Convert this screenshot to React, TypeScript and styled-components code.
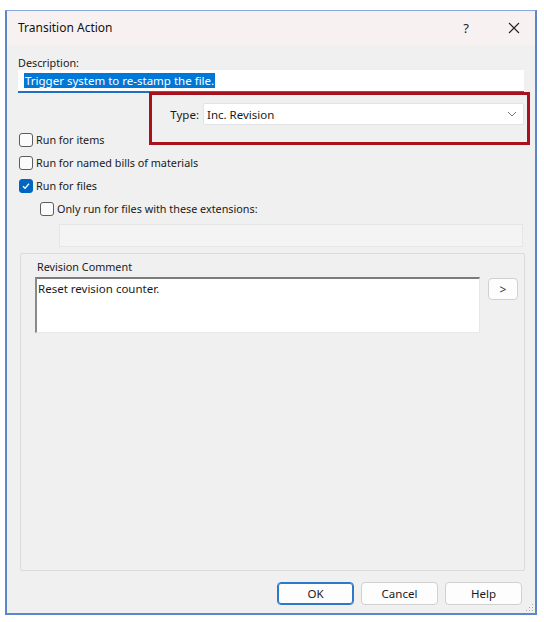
import React from "react";
import styled, { createGlobalStyle } from "styled-components";

const Global = createGlobalStyle`
  html, body { margin: 0; padding: 0; background: #ffffff; }
  body { font-family: "Noto Sans", "Open Sans", sans-serif; font-size: 10.8px; color: #1a1a1a; }
  * { box-sizing: border-box; }
`;

const Window = styled.div`
  margin: 10px 0 0 5px;
  width: 532px;
  height: 605px;
  border: 2px solid #5b86c9;
  border-top: 1px solid #8aa9da;
  background: #f0f0f0;
  display: flex;
  flex-direction: column;
  position: relative;
`;

const TitleBar = styled.div`
  height: 34px;
  background: #f8f1f1;
  display: flex;
  align-items: center;
  padding: 0 0 1px 11px;
`;

const Title = styled.div`
  flex: 1;
  font-size: 12px;
  color: #111;
`;

const TitleButton = styled.div<{ $w: number }>`
  width: ${(p) => p.$w}px;
  height: 33px;
  display: flex;
  align-items: center;
  justify-content: center;
  font-size: 13px;
  color: #222;
`;

const Body = styled.div`
  flex: 1;
  display: flex;
  flex-direction: column;
  padding: 10px 11px 0 11px;
  position: relative;
`;

const Label = styled.div`
  height: 15px;
  line-height: 15px;
`;

const DescField = styled.div`
  height: 23px;
  background: #fff;
  border-bottom: 2px solid #1f6fc2;
  display: flex;
  align-items: center;
  padding-left: 6px;
  font-size: 11.5px;
`;

const Selected = styled.span`
  background: #0078d7;
  color: #fff;
  line-height: 15px;
  padding: 0 1px;
`;

const TypeRow = styled.div`
  margin-top: 10px;
  display: flex;
  align-items: center;
  justify-content: flex-end;
  gap: 4px;
  font-size: 11.5px;
`;

const Select = styled.div`
  width: 321px;
  height: 22px;
  background: #fff;
  border: 1px solid #e3e3e3;
  border-radius: 2px;
  display: flex;
  align-items: center;
  justify-content: space-between;
  padding: 0 6px 0 3px;
`;

const Annotation = styled.div`
  position: absolute;
  left: 142px;
  top: 47px;
  width: 381px;
  height: 53px;
  border: 3px solid #a8121f;
  pointer-events: none;
`;

const CheckList = styled.div`
  margin-top: 3px;
`;

const CheckRow = styled.div<{ $indent?: number }>`
  height: 23px;
  display: flex;
  align-items: center;
  gap: 3px;
  padding-left: ${(p) => 1 + (p.$indent ?? 0)}px;
`;

const Box = styled.div<{ $checked?: boolean }>`
  width: 14px;
  height: 14px;
  border-radius: 3px;
  border: 1px solid ${(p) => (p.$checked ? "#0067c0" : "#5d5d5d")};
  background: ${(p) => (p.$checked ? "#0067c0" : "#fbfbfb")};
  display: flex;
  align-items: center;
  justify-content: center;
`;

const ExtField = styled.div`
  margin: 4px 1px 0 41px;
  height: 23px;
  background: #f4f4f4;
  border: 1px solid #e6e6e6;
`;

const Group = styled.fieldset`
  margin: 6px 0 0 2px;
  height: 318px;
  border: 1px solid #dadada;
  border-radius: 2px;
  padding: 5px 6px 0 14px;
  display: flex;
  flex-direction: column;
`;

const GroupLabel = styled.div`
  height: 15px;
  line-height: 15px;
  padding-left: 2px;
`;

const CommentRow = styled.div`
  margin-top: 3px;
  display: flex;
  gap: 8px;
  align-items: flex-start;
  font-size: 11.5px;
`;

const TextArea = styled.div`
  width: 445px;
  height: 56px;
  background: #fff;
  border-top: 2px solid #7c7c7c;
  border-left: 2px solid #8a8a8a;
  border-right: 1px solid #e8e8e8;
  border-bottom: 1px solid #e8e8e8;
  padding: 2px 1px;
  line-height: 15px;
`;

const SmallButton = styled.div`
  width: 30px;
  height: 22px;
  margin-top: 1px;
  background: #fdfdfd;
  border: 1px solid #d0d0d0;
  border-radius: 4px;
  display: flex;
  align-items: center;
  justify-content: center;
  font-size: 12px;
  color: #333;
`;

const Footer = styled.div`
  display: flex;
  justify-content: flex-end;
  gap: 7px;
  padding: 11px 2px 0 0;
`;

const Button = styled.div<{ $default?: boolean }>`
  width: 77px;
  height: 23px;
  background: #fdfdfd;
  border: 1px solid ${(p) => (p.$default ? "#2f78c8" : "#d0d0d0")};
  box-shadow: ${(p) => (p.$default ? "inset 0 0 0 1px #2f78c8" : "none")};
  border-radius: 4px;
  display: flex;
  align-items: center;
  justify-content: center;
  font-size: 11.5px;
`;

const Grip = styled.svg`
  position: absolute;
  right: 1px;
  bottom: 1px;
`;

const Check = ({ checked, label, indent }: { checked?: boolean; label: string; indent?: number }) => (
  <CheckRow $indent={indent}>
    <Box $checked={checked}>
      {checked && (
        <svg width="10" height="10" viewBox="0 0 10 10">
          <path d="M2 5.2 L4.1 7.2 L8 2.8" fill="none" stroke="#fff" strokeWidth="1.3" />
        </svg>
      )}
    </Box>
    <span>{label}</span>
  </CheckRow>
);

export default function App() {
  return (
    <>
      <Global />
      <Window>
        <TitleBar>
          <Title>Transition Action</Title>
          <TitleButton $w={54}>?</TitleButton>
          <TitleButton $w={42}>
            <svg width="12" height="12" viewBox="0 0 12 12">
              <path d="M1 1 L11 11 M11 1 L1 11" stroke="#222" strokeWidth="1.1" />
            </svg>
          </TitleButton>
        </TitleBar>
        <Body>
          <Label>Description:</Label>
          <DescField>
            <Selected>Trigger system to re-stamp the file.</Selected>
          </DescField>
          <TypeRow>
            <span>Type:</span>
            <Select>
              <span>Inc. Revision</span>
              <svg width="10" height="6" viewBox="0 0 10 6">
                <path d="M1 1 L5 5 L9 1" fill="none" stroke="#777" strokeWidth="1" />
              </svg>
            </Select>
          </TypeRow>
          <Annotation />
          <CheckList>
            <Check label="Run for items" />
            <Check label="Run for named bills of materials" />
            <Check checked label="Run for files" />
            <Check indent={21} label="Only run for files with these extensions:" />
          </CheckList>
          <ExtField />
          <Group>
            <GroupLabel>Revision Comment</GroupLabel>
            <CommentRow>
              <TextArea>Reset revision counter.</TextArea>
              <SmallButton>&gt;</SmallButton>
            </CommentRow>
          </Group>
          <Footer>
            <Button $default>OK</Button>
            <Button>Cancel</Button>
            <Button>Help</Button>
          </Footer>
        </Body>
        <Grip width="8" height="8" viewBox="0 0 8 8">
          <rect x="6" y="0" width="1" height="1" fill="#aaa" />
          <rect x="6" y="3" width="1" height="1" fill="#aaa" />
          <rect x="3" y="3" width="1" height="1" fill="#aaa" />
          <rect x="6" y="6" width="1" height="1" fill="#aaa" />
          <rect x="3" y="6" width="1" height="1" fill="#aaa" />
          <rect x="0" y="6" width="1" height="1" fill="#aaa" />
        </Grip>
      </Window>
    </>
  );
}
